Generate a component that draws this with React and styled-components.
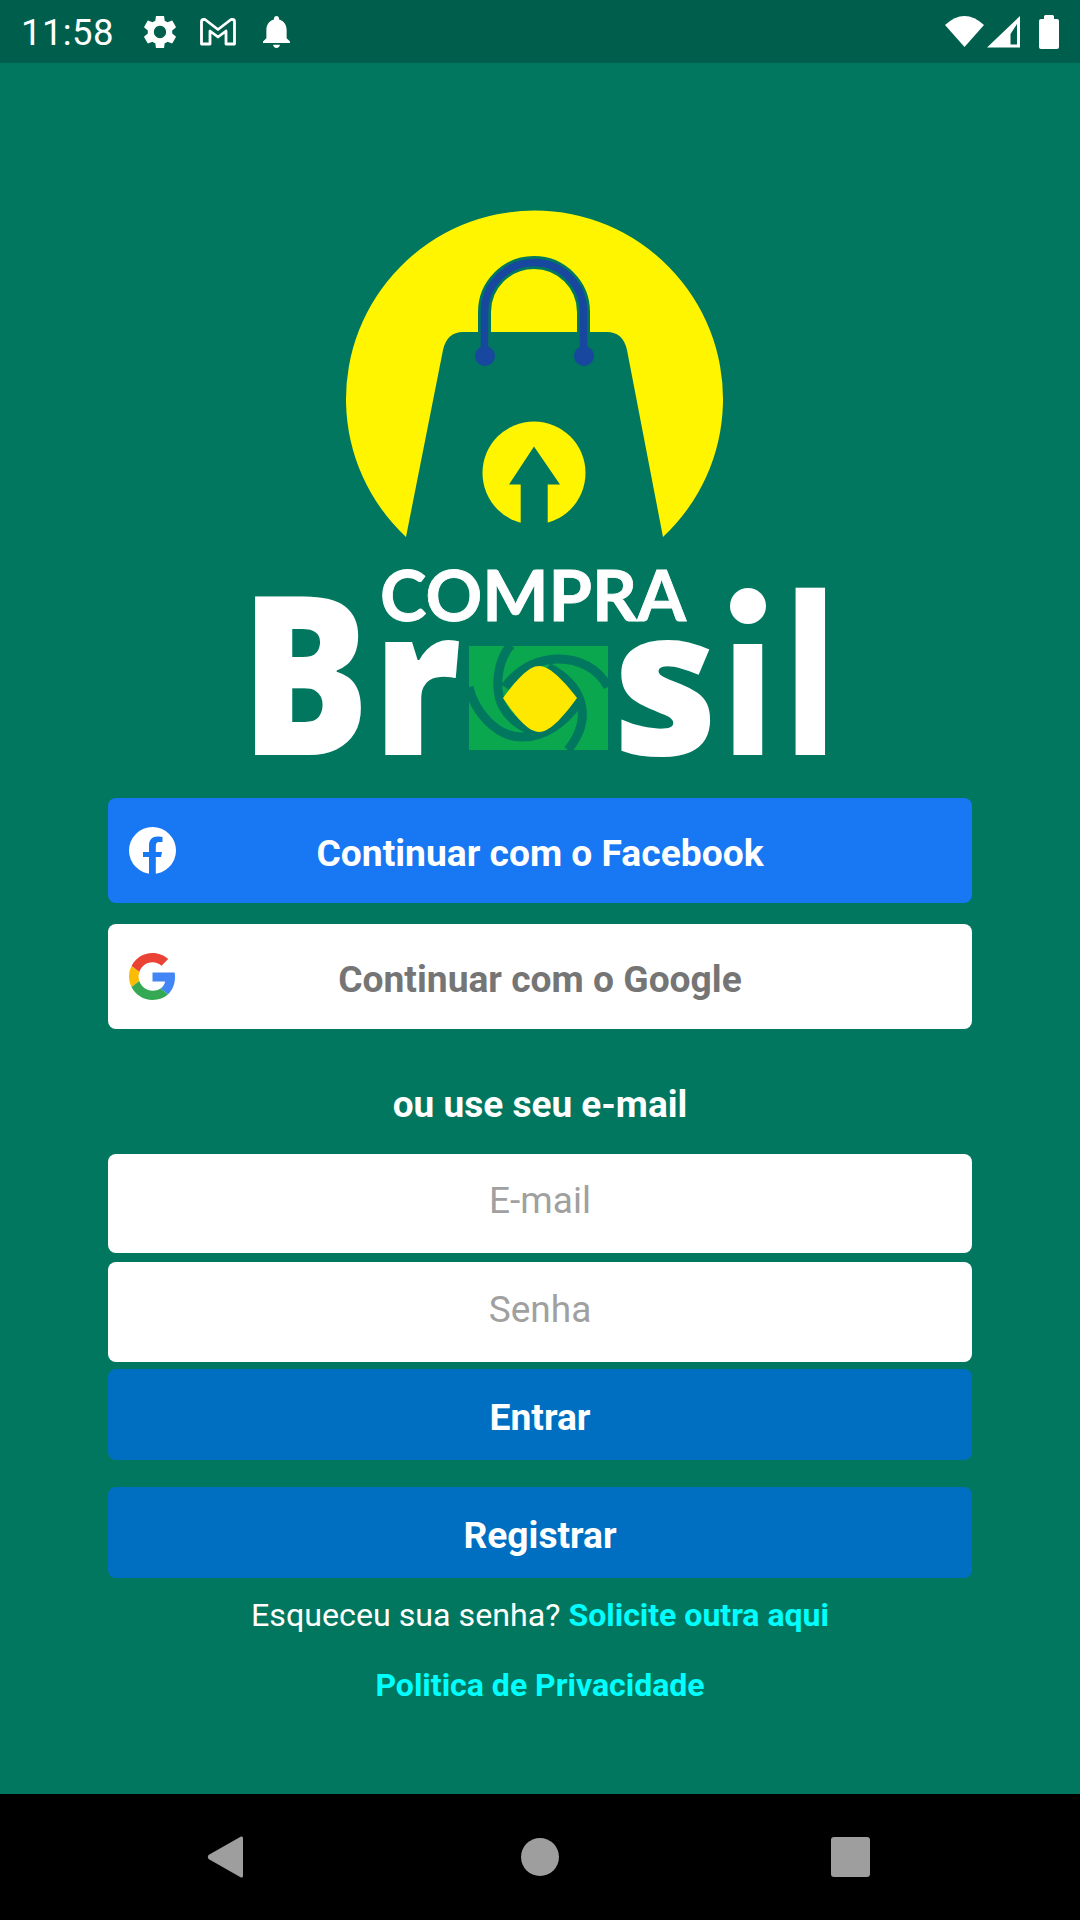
import React from "react";
import styled, { createGlobalStyle } from "styled-components";

const GlobalStyle = createGlobalStyle`
  html, body {
    margin: 0;
    padding: 0;
    background: #00775e;
  }
  * {
    box-sizing: border-box;
  }
`;

const Screen = styled.div`
  width: 1080px;
  height: 1920px;
  display: flex;
  flex-direction: column;
  overflow: hidden;
  font-family: Roboto, "Liberation Sans", sans-serif;
  background: #00775e;
`;

const StatusBar = styled.div`
  height: 63px;
  flex: none;
  display: flex;
  align-items: center;
  padding: 0 21px;
  background: #005f4c;
  color: #fff;
`;

const Clock = styled.span`
  font-size: 36.5px;
  line-height: 40px;
  letter-spacing: 0.4px;
  margin-right: 30.5px;
  padding-top: 2px;
`;

const StatusIcon = styled.svg`
  display: block;
  flex: none;
  fill: #fff;
  margin-left: ${(p) => p.$left || 0}px;
`;

const Spacer = styled.div`
  flex: 1;
`;

const Main = styled.main`
  flex: 1;
  display: flex;
  flex-direction: column;
  align-items: stretch;
  padding: 137px 108px 0;
`;

const LogoArt = styled.svg`
  display: block;
  width: 600px;
  height: 570px;
  align-self: center;
  margin-bottom: 28px;
  overflow: visible;
`;

const Word = styled.text`
  font-family: "Open Sans", "Liberation Sans", sans-serif;
  font-weight: 800;
  fill: #fff;
  text-anchor: middle;
`;

const Tagline = styled.text`
  font-family: Lato, "Liberation Sans", sans-serif;
  font-weight: 700;
  font-size: 70px;
  fill: #fff;
`;

const ActionButton = styled.button`
  display: grid;
  grid-template-columns: 1fr auto 1fr;
  align-items: center;
  width: 100%;
  height: ${(p) => p.$height}px;
  margin: ${(p) => p.$top || 0}px 0 0;
  padding: 0 21px;
  border: none;
  border-radius: 8px;
  background: ${(p) => p.$bg};
  color: ${(p) => p.$color || "#fff"};
  font-family: inherit;
  font-weight: 700;
  font-size: 37.2px;
  line-height: 40px;
`;

const ButtonIcon = styled.svg`
  display: block;
  width: 47px;
  height: 47px;
`;

const ButtonLabel = styled.span`
  grid-column: 2;
  padding-top: 4px;
`;

const Heading = styled.div`
  margin: 56px 0 29px;
  text-align: center;
  color: #fff;
  font-weight: 700;
  font-size: 37px;
  line-height: 40px;
`;

const Field = styled.input`
  display: block;
  width: 100%;
  height: ${(p) => p.$height}px;
  margin: ${(p) => p.$top || 0}px 0 0;
  padding: 0 0 6px;
  border: none;
  border-radius: 8px;
  background: #fff;
  text-align: center;
  font-family: inherit;
  font-size: 37px;

  &::placeholder {
    color: #a0a0a0;
    opacity: 1;
  }
`;

const HelpText = styled.div`
  margin-top: ${(p) => p.$top}px;
  text-align: center;
  color: #fff;
  font-size: 32.2px;
  line-height: 40px;
`;

const LinkText = styled.span`
  color: #00ffff;
  font-weight: 700;
  font-size: 32px;
`;

const NavBar = styled.nav`
  height: 126px;
  flex: none;
  display: flex;
  align-items: center;
  padding-left: 207px;
  background: #000;
`;

const NavIcon = styled.svg`
  display: block;
  flex: none;
  fill: #9e9e9e;
  margin-left: ${(p) => p.$left || 0}px;
`;

const Letter = ({ x, y, size, sx, children }) => (
  <Word transform={`translate(${x} ${y}) scale(${sx} 1)`} fontSize={size}>
    {children}
  </Word>
);

const Logo = () => (
  <LogoArt viewBox="240 200 600 570" role="img" aria-label="Compra Brasil">
    <path
      fill="#fff500"
      d="M406 537A188.5 188.5 0 1 1 663 537L627 350Q623 332 607 332L463 332Q447 332 443 350Z"
    />
    <path
      d="M484.5 356V312A49.5 49.5 0 0 1 583.5 312V356"
      fill="none"
      stroke="#00775e"
      strokeWidth="13"
    />
    <path
      d="M484.5 356V312A49.5 49.5 0 0 1 583.5 312V356"
      fill="none"
      stroke="#17479e"
      strokeWidth="7.5"
    />
    <circle cx="485" cy="356" r="10" fill="#17479e" />
    <circle cx="584" cy="356" r="10" fill="#17479e" />
    <circle cx="534" cy="473" r="51.5" fill="#fff500" />
    <path fill="#00775e" d="M534 446.500L560 484.500H547.700V530H520.700V484.500H509Z" />

    <Tagline x="380" y="621" textLength="306" lengthAdjust="spacingAndGlyphs" stroke="#fff" strokeWidth="0.8">
      COMPRA
    </Tagline>

    <Letter x="305" y="755" size={221} sx={0.87}>B</Letter>
    <Letter x="417" y="755" size={204} sx={0.92}>r</Letter>
    <rect x="469" y="646" width="139" height="104" fill="#0aa74f" />
    <g fill="none" stroke="#00775e" strokeWidth="9">
      <path d="M511 645C497 660 494 690 503 707C510 720 525 730 540 733" />
      <path d="M608 687C598 668 578 658 556 659C536 660 518 670 505 687" />
      <path d="M568 750C580 735 586 718 580 700C575 686 563 675 548 667" />
      <path d="M469 687C474 710 495 737 522 737C545 737 565 722 578 703" />
    </g>
    <path
      fill="#ffe800"
      d="M503 698C512 686 527 666 539 666C551 666 566 684 577 698C566 713 551 732 539 732C527 732 513 713 503 698Z"
    />
    <Letter x="665.5" y="755" size={204} sx={1}>s</Letter>
    <Letter x="748" y="755" size={200} sx={0.75}>ı</Letter>
    <circle cx="748" cy="606" r="18" fill="#fff" />
    <Letter x="810.5" y="755" size={220} sx={0.7}>l</Letter>
  </LogoArt>
);

const FacebookIcon = () => (
  <ButtonIcon viewBox="0 0 47 47">
    <circle cx="23.500" cy="23.500" r="23.500" fill="#fff" />
    <path
      fill="#1877f2"
      d="M20 47V30H14V25H20V18.500C20 12.500 23.500 9.500 28.500 9.500C30.500 9.500 32.500 9.800 33.500 10V15H30C27.500 15 26.800 17 26.800 19V25H33L32 30H26.800V47Z"
    />
  </ButtonIcon>
);

const GoogleIcon = () => (
  <ButtonIcon viewBox="0 0 48 48">
    <path fill="#ea4335" d="M24 9.500c3.540 0 6.710 1.220 9.210 3.600l6.850-6.850C35.900 2.380 30.470 0 24 0 14.620 0 6.510 5.380 2.560 13.220l7.980 6.190C12.430 13.720 17.740 9.500 24 9.500z" />
    <path fill="#4285f4" d="M46.980 24.550c0-1.570-.15-3.090-.38-4.550H24v9.020h12.940c-.58 2.960-2.260 5.480-4.780 7.180l7.730 6c4.510-4.180 7.090-10.360 7.090-17.650z" />
    <path fill="#fbbc05" d="M10.530 28.590c-.48-1.450-.76-2.990-.76-4.590s.27-3.140.76-4.590l-7.980-6.190C.92 16.460 0 20.120 0 24c0 3.880.92 7.540 2.560 10.780l7.970-6.190z" />
    <path fill="#34a853" d="M24 48c6.480 0 11.930-2.130 15.890-5.810l-7.730-6c-2.150 1.450-4.920 2.300-8.160 2.300-6.260 0-11.570-4.220-13.470-9.910l-7.980 6.190C6.510 42.620 14.620 48 24 48z" />
  </ButtonIcon>
);

export default function App() {
  return (
    <>
      <GlobalStyle />
      <Screen>
        <StatusBar>
          <Clock>11:58</Clock>
          <StatusIcon width="32" height="32" viewBox="2.600 2.600 18.800 18.800">
            <path d="M19.140 12.940c.04-.3.06-.61.06-.94 0-.32-.02-.64-.07-.94l2.030-1.580c.18-.14.23-.41.12-.61l-1.920-3.320c-.12-.22-.37-.29-.59-.22l-2.390.96c-.5-.38-1.030-.7-1.620-.94l-.36-2.540c-.04-.24-.24-.41-.48-.41h-3.840c-.24 0-.43.17-.47.41l-.36 2.540c-.59.24-1.130.57-1.620.94l-2.390-.96c-.22-.08-.47 0-.59.22L2.740 8.870c-.12.21-.08.47.12.61l2.030 1.580c-.05.3-.09.63-.09.94s.02.64.07.94l-2.030 1.580c-.18.14-.23.41-.12.61l1.920 3.320c.12.22.37.29.59.22l2.390-.96c.5.38 1.030.7 1.620.94l.36 2.540c.05.24.24.41.48.41h3.840c.24 0 .44-.17.47-.41l.36-2.540c.59-.24 1.130-.56 1.620-.94l2.390.96c.22.08.47 0 .59-.22l1.920-3.320c.12-.22.07-.47-.12-.61l-2.010-1.580zM12 15.600c-1.980 0-3.600-1.620-3.600-3.600s1.620-3.600 3.600-3.600 3.600 1.620 3.600 3.600-1.620 3.600-3.600 3.600z" />
          </StatusIcon>
          <StatusIcon $left={24} width="36" height="28" viewBox="0 0 36 28">
            <path
              d="M1.500 26V3.500Q1.500 1.500 3.500 1.500H5L18 11.500L31 1.500H32.500Q34.500 1.500 34.500 3.500V26H26V13L18 19L10 13V26Z"
              fill="none"
              stroke="#fff"
              strokeWidth="2.800"
              strokeLinejoin="round"
            />
          </StatusIcon>
          <StatusIcon $left={27} width="27" height="32" viewBox="4 2.500 16 19.500" preserveAspectRatio="none">
            <path d="M12 22c1.100 0 2-.9 2-2h-4c0 1.100.9 2 2 2zm6-6v-5c0-3.070-1.630-5.640-4.500-6.320V4c0-.83-.67-1.500-1.500-1.500s-1.500.67-1.500 1.500v.68C7.640 5.360 6 7.920 6 11v5l-2 2v1h16v-1l-2-2z" />
          </StatusIcon>
          <Spacer />
          <StatusIcon width="39" height="31" viewBox="0 0 39 31">
            <path d="M0 9Q19.500 -9 39 9L19.500 31Z" />
          </StatusIcon>
          <StatusIcon $left={3} width="33" height="32" viewBox="0 0 33 32">
            <path fillRule="evenodd" d="M0 31.500H33V0ZM23.500 28.500H30V8L23.500 18Z" />
          </StatusIcon>
          <StatusIcon $left={19} width="20" height="34" viewBox="0 0 20 34">
            <path d="M5 4V1.500Q5 0 6.500 0H13.500Q15 0 15 1.500V4H18Q20 4 20 6V32Q20 34 18 34H2Q0 34 0 32V6Q0 4 2 4Z" />
          </StatusIcon>
        </StatusBar>

        <Main>
          <Logo />

          <ActionButton $height={105} $bg="#1877f2">
            <FacebookIcon />
            <ButtonLabel>Continuar com o Facebook</ButtonLabel>
          </ActionButton>
          <ActionButton $height={105} $top={21} $bg="#fff" $color="#757575">
            <GoogleIcon />
            <ButtonLabel>Continuar com o Google</ButtonLabel>
          </ActionButton>

          <Heading>ou use seu e-mail</Heading>

          <Field $height={99} placeholder="E-mail" />
          <Field $height={100} $top={9} placeholder="Senha" type="password" />

          <ActionButton $height={91} $top={7} $bg="#006fc1">
            <ButtonLabel>Entrar</ButtonLabel>
          </ActionButton>
          <ActionButton $height={91} $top={27} $bg="#006fc1">
            <ButtonLabel>Registrar</ButtonLabel>
          </ActionButton>

          <HelpText $top={17}>
            Esqueceu sua senha? <LinkText>Solicite outra aqui</LinkText>
          </HelpText>
          <HelpText $top={30}>
            <LinkText>Politica de Privacidade</LinkText>
          </HelpText>
        </Main>

        <NavBar>
          <NavIcon width="36" height="42" viewBox="0 0 36 42">
            <path d="M34 0.500Q36 0 36 2V40Q36 42 34 41.500L1.500 23Q0 21 1.500 19Z" />
          </NavIcon>
          <NavIcon $left={278} width="38" height="38" viewBox="0 0 38 38">
            <circle cx="19" cy="19" r="19" />
          </NavIcon>
          <NavIcon $left={272} width="39" height="40" viewBox="0 0 39 40">
            <rect width="39" height="40" rx="3" />
          </NavIcon>
        </NavBar>
      </Screen>
    </>
  );
}
